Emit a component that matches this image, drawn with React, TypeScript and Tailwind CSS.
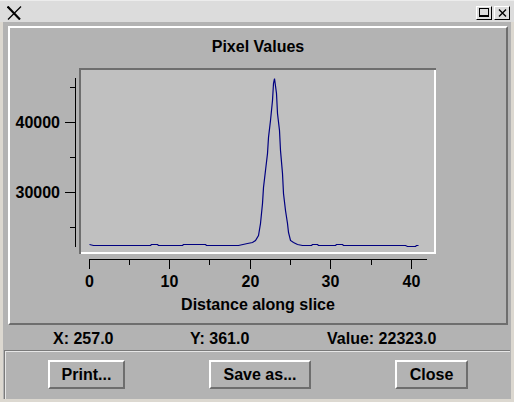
import React from 'react'

const font = { fontFamily: '"Liberation Sans", Arial, sans-serif' }

const data: [number, number][] = [
  [89, 244], [93, 245], [150, 245], [151, 244], [157, 244], [158, 245], [182, 245], [183, 244],
  [205, 244], [206, 245], [238, 245], [247, 243], [252, 242], [255, 240], [258, 235], [260, 223],
  [262, 203], [263, 187], [265, 170], [267, 153], [268, 137], [270, 120], [272, 100], [273, 83],
  [274, 78], [276, 93], [277, 113], [279, 130], [280, 150], [282, 173], [283, 193], [285, 210],
  [287, 223], [288, 232], [290, 240], [293, 242], [297, 244], [302, 245], [311, 245], [312, 244],
  [317, 244], [318, 245], [335, 245], [336, 244], [342, 244], [343, 245], [405, 245], [407, 246],
  [415, 246], [416, 245], [418, 245],
]

function Chart() {
  const xMajor = [89, 169, 250, 330, 411]
  const xMinor = [129, 209, 290, 371]
  return (
    <svg width={494} height={236} viewBox="10 60 494 236" className="block">
      {/* plot box, sunken */}
      <rect x={79} y={68} width={357} height={186} fill="#ffffff" />
      <path d="M79 68 H436 V70 H81 V254 H79 Z" fill="#6e6e6e" />
      <rect x={81} y={70} width={353} height={182} fill="#c0c0c0" />
      <polyline
        points={data.map(p => `${p[0] + 0.5},${p[1] + 0.5}`).join(' ')}
        fill="none"
        stroke="#000080"
        strokeWidth={1.2}
      />
      {/* y axis */}
      <line x1={75.5} y1={78} x2={75.5} y2={247} stroke="#000" />
      {[122, 192].map(y => (
        <line key={y} x1={65} y1={y + 0.5} x2={75} y2={y + 0.5} stroke="#000" />
      ))}
      {[87, 157, 227].map(y => (
        <line key={y} x1={70} y1={y + 0.5} x2={75} y2={y + 0.5} stroke="#000" />
      ))}
      <text x={60} y={128} textAnchor="end" fontSize={16} fontWeight="bold" style={font}>40000</text>
      <text x={60} y={198} textAnchor="end" fontSize={16} fontWeight="bold" style={font}>30000</text>
      {/* x axis */}
      <line x1={89} y1={259.5} x2={427} y2={259.5} stroke="#000" />
      {xMajor.map(x => (
        <line key={x} x1={x + 0.5} y1={259} x2={x + 0.5} y2={269} stroke="#000" />
      ))}
      {xMinor.map(x => (
        <line key={x} x1={x + 0.5} y1={259} x2={x + 0.5} y2={265} stroke="#000" />
      ))}
      {xMajor.map((x, i) => (
        <text key={x} x={x + 0.5} y={287} textAnchor="middle" fontSize={16} fontWeight="bold" style={font}>
          {i * 10}
        </text>
      ))}
    </svg>
  )
}

function Button({ label, width }: { label: string; width: string }) {
  return (
    <button
      className={`${width} h-[29px] bg-[#b3b3b3] border-2 border-t-white border-l-white border-r-[#6e6e6e] border-b-[#6e6e6e] text-[16px] font-bold text-black leading-none`}
    >
      {label}
    </button>
  )
}

export default function App() {
  return (
    <div className="w-[514px] h-[402px] bg-[#dcd8d0] flex flex-col text-black" style={font}>
      {/* title bar */}
      <div className="h-[22px] bg-[#dcdcdc] border-t border-[#ececec] flex items-center justify-between pl-[7px] pr-[4px]">
        <svg width={15} height={14} viewBox="0 0 15 14" className="mt-[2px]">
          <path d="M0.5 0.5 L13 13.5" stroke="#000" strokeWidth={2.2} />
          <path d="M14 0.5 L1 13.5" stroke="#000" strokeWidth={1.2} />
        </svg>
        <div className="flex gap-[2px] mt-[2px]">
          <div className="w-[16px] h-[14px] bg-[#dcdcdc] border border-t-white border-l-white border-r-black border-b-black flex items-center justify-center">
            <div className="w-[10px] h-[9px] border border-black border-b-2" />
          </div>
          <div className="w-[16px] h-[14px] bg-[#dcdcdc] border border-t-white border-l-white border-r-black border-b-black flex items-center justify-center">
            <svg width={9} height={8} viewBox="0 0 9 8">
              <path d="M1 0.5 L8 7.5 M8 0.5 L1 7.5" stroke="#000" strokeWidth={1.4} />
            </svg>
          </div>
        </div>
      </div>

      {/* body */}
      <div className="flex-1 mx-[3px] mb-[3px] bg-[#b3b3b3] flex flex-col">
        {/* chart panel */}
        <div className="mt-[4px] ml-[5px] mr-[3px] h-[299px] border-2 border-t-white border-l-white border-r-[#6e6e6e] border-b-[#6e6e6e] flex flex-col">
          <div className="h-[32px] pt-[10px] text-center text-[16px] font-bold leading-[18px]">Pixel Values</div>
          <Chart />
          <div className="h-[18px] text-center text-[16px] font-bold leading-[18px]">Distance along slice</div>
        </div>

        {/* status */}
        <div className="h-[25px] pl-[50px] pt-[6px] flex text-[16px] font-bold leading-[16px]">
          <div className="w-[137px]">X: 257.0</div>
          <div className="w-[137px]">Y: 361.0</div>
          <div className="w-[137px]">Value: 22323.0</div>
        </div>

        {/* buttons */}
        <div className="flex-1 ml-[1px] mr-[1px] border-t border-l border-[#7a7a7a] shadow-[inset_1px_1px_0_#e6e6e6] flex items-start pt-[9px]">
          <div className="ml-[43px]"><Button label="Print..." width="w-[77px]" /></div>
          <div className="ml-[84px]"><Button label="Save as..." width="w-[102px]" /></div>
          <div className="ml-[84px]"><Button label="Close" width="w-[73px]" /></div>
        </div>
      </div>
    </div>
  )
}
